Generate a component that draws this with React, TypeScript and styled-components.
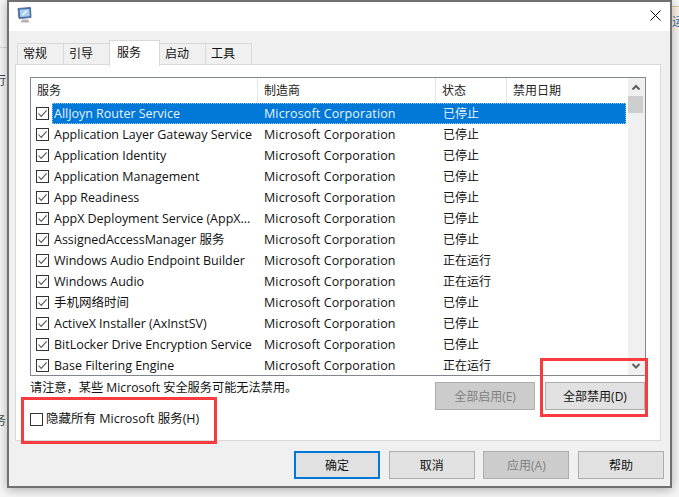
import styled, { createGlobalStyle } from "styled-components";

const FONT = `"Open Sans", "Noto Sans CJK SC", sans-serif`;

const services = [
  { name: "AllJoyn Router Service", status: "已停止" },
  { name: "Application Layer Gateway Service", status: "已停止" },
  { name: "Application Identity", status: "已停止" },
  { name: "Application Management", status: "已停止" },
  { name: "App Readiness", status: "已停止" },
  { name: "AppX Deployment Service (AppX...", status: "已停止" },
  { name: "AssignedAccessManager 服务", status: "已停止" },
  { name: "Windows Audio Endpoint Builder", status: "正在运行" },
  { name: "Windows Audio", status: "正在运行" },
  { name: "手机网络时间", status: "已停止" },
  { name: "ActiveX Installer (AxInstSV)", status: "已停止" },
  { name: "BitLocker Drive Encryption Service", status: "已停止" },
  { name: "Base Filtering Engine", status: "正在运行" },
];

const tabs = ["常规", "引导", "服务", "启动", "工具"];

const CheckMark = () => (
  <svg width="13" height="13" viewBox="0 0 13 13">
    <rect x="0.5" y="0.5" width="12" height="12" fill="#fff" stroke="#333" />
    <path d="M2.5 6.5 L5.2 9.4 L10.6 3.4" fill="none" stroke="#555" strokeWidth="1.1" />
  </svg>
);

const MonitorIcon = () => (
  <svg width="15" height="16" viewBox="0 0 15 16">
    <path d="M1 1.5 L13.5 0.5 L14 10.5 L2 11.5 Z" fill="#3f6fb5" stroke="#5b6f95" />
    <path d="M2.6 2.8 L12.3 2 L12.7 9.2 L3.2 10 Z" fill="#a9d0f0" />
    <path d="M5.5 8 L10 3.5" stroke="#f4f8fc" strokeWidth="1.4" />
    <path d="M5 12.5 H11 L12.5 15.5 H3.5 Z" fill="#b4b4b4" />
  </svg>
);

const App = () => {
  return (
    <>
      <GlobalStyle />
      <Desktop>
        <DesktopLine />
        <LeftText $top={71}>行</LeftText>
        <LeftText $top={411}>务</LeftText>
        <RightNote>运</RightNote>
      </Desktop>
      <Dialog>
        <TitleBar>
          <MonitorIcon />
          <CloseIcon width="11" height="11" viewBox="0 0 11 11">
            <path d="M0.5 0.5 L10.5 10.5 M10.5 0.5 L0.5 10.5" stroke="#111" strokeWidth="1" />
          </CloseIcon>
        </TitleBar>
        <Body>
          <TabRow>
            {tabs.map((tab) => (
              <Tab key={tab} $active={tab === "服务"}>
                {tab}
              </Tab>
            ))}
          </TabRow>
          <Panel>
            <ListBox>
              <ListMain>
                <HeaderRow>
                  <HeaderCell>服务</HeaderCell>
                  <HeaderCell>制造商</HeaderCell>
                  <HeaderCell>状态</HeaderCell>
                  <HeaderCell>禁用日期</HeaderCell>
                </HeaderRow>
                <Rows>
                  {services.map((service, index) => (
                    <Row key={service.name}>
                      <CheckCell>
                        <CheckMark />
                      </CheckCell>
                      <RowBody $selected={index === 0}>
                        <NameCell>{service.name}</NameCell>
                        <MakerCell>Microsoft Corporation</MakerCell>
                        <StatusCell>{service.status}</StatusCell>
                      </RowBody>
                    </Row>
                  ))}
                </Rows>
              </ListMain>
              <ScrollBar>
                <ScrollArrow width="17" height="18" viewBox="0 0 17 18">
                  <path d="M4.5 11.5 L8 8 L11.5 11.5" fill="none" stroke="#606060" strokeWidth="2" />
                </ScrollArrow>
                <Thumb />
                <ScrollSpacer />
                <ScrollArrow width="17" height="17" viewBox="0 0 17 17">
                  <path d="M4.5 6 L8 9.5 L11.5 6" fill="none" stroke="#606060" strokeWidth="2" />
                </ScrollArrow>
              </ScrollBar>
            </ListBox>
            <ActionArea>
              <NoteColumn>
                <Note>请注意，某些 Microsoft 安全服务可能无法禁用。</Note>
                <HideRow>
                  <EmptyBox />
                  隐藏所有 Microsoft 服务(H)
                </HideRow>
              </NoteColumn>
              <PanelButton $disabled>全部启用(E)</PanelButton>
              <PanelButton>全部禁用(D)</PanelButton>
            </ActionArea>
          </Panel>
          <Footer>
            <FooterButton $primary>确定</FooterButton>
            <FooterButton>取消</FooterButton>
            <FooterButton $disabled>应用(A)</FooterButton>
            <FooterButton>帮助</FooterButton>
          </Footer>
        </Body>
      </Dialog>
      <Callout $x={21} $y={397} $w={196} $h={47} />
      <Callout $x={540} $y={358} $w={108} $h={59} />
    </>
  );
};

export default App;

const GlobalStyle = createGlobalStyle`
  html, body {
    margin: 0;
    padding: 0;
    height: 497px;
    overflow: hidden;
    background: #f6f6f6;
    font-family: ${FONT};
    font-size: 12px;
    color: #111;
  }
`;

const Desktop = styled.div`
  position: absolute;
  inset: 0;
  overflow: hidden;
`;

const DesktopLine = styled.div`
  position: absolute;
  left: 0;
  top: 47px;
  width: 7px;
  height: 1px;
  background: #d8d8d8;
`;

const LeftText = styled.span<{ $top: number }>`
  position: absolute;
  left: -6px;
  top: ${(p) => p.$top}px;
  color: #444;
`;

const RightNote = styled.div`
  position: absolute;
  left: 672px;
  top: 6px;
  width: 12px;
  height: 25px;
  box-sizing: border-box;
  padding-top: 7px;
  background: #fbf3e4;
  border-top: 1px solid #d9c7a6;
  color: #3f6fb5;
  line-height: 16px;
`;

const Dialog = styled.div`
  position: absolute;
  left: 7px;
  top: 0;
  width: 665px;
  height: 488px;
  box-sizing: border-box;
  border: 2px solid #707070;
  background: #f0f0f0;
  box-shadow: 0 2px 10px rgba(0, 0, 0, 0.3);
  display: flex;
  flex-direction: column;
`;

const TitleBar = styled.div`
  box-sizing: border-box;
  height: 29px;
  flex: none;
  background: #fff;
  display: flex;
  align-items: center;
  justify-content: space-between;
  padding: 0 9px 3px 8px;
`;

const CloseIcon = styled.svg`
  display: block;
`;

const Body = styled.div`
  flex: 1;
  display: flex;
  flex-direction: column;
  padding: 10px 6px 8px 6px;
`;

const TabRow = styled.div`
  display: flex;
  align-items: flex-end;
  height: 24px;
  padding-left: 2px;
  margin-bottom: -1px;
  position: relative;
  z-index: 1;
`;

const Tab = styled.div<{ $active?: boolean }>`
  box-sizing: border-box;
  width: ${(p) => (p.$active ? 51 : 47)}px;
  height: ${(p) => (p.$active ? 26 : 22)}px;
  margin-right: -1px;
  margin-bottom: ${(p) => (p.$active ? -1 : 0)}px;
  padding-top: ${(p) => (p.$active ? 2 : 0)}px;
  padding-left: ${(p) => (p.$active ? 7 : 5)}px;
  background: ${(p) => (p.$active ? "#fff" : "#f0f0f0")};
  border: 1px solid #d9d9d9;
  border-bottom: ${(p) => (p.$active ? "none" : "1px solid #d9d9d9")};
  position: relative;
  z-index: ${(p) => (p.$active ? 2 : 1)};
`;

const Panel = styled.div`
  box-sizing: border-box;
  width: 646px;
  height: 377px;
  margin-right: 3px;
  background: #fff;
  border: 1px solid #d9d9d9;
  padding: 12px 14px 0 14px;
  display: flex;
  flex-direction: column;
`;

const ListBox = styled.div`
  box-sizing: border-box;
  width: 616px;
  height: 299px;
  border: 1px solid #828790;
  display: flex;
  justify-content: space-between;
  flex: none;
  overflow: hidden;
`;

const ListMain = styled.div`
  width: 595px;
  display: flex;
  flex-direction: column;
`;

const HeaderRow = styled.div`
  display: grid;
  grid-template-columns: 227px 178px 71px 1fr;
  height: 25px;
  flex: none;
`;

const HeaderCell = styled.div`
  border-right: 1px solid #e5e5e5;
  padding-left: 6px;
  line-height: 25px;
  color: #222;
  &:last-child {
    border-right: none;
  }
`;

const Rows = styled.div`
  display: flex;
  flex-direction: column;
`;

const Row = styled.div`
  height: 21px;
  flex: none;
  display: flex;
`;

const CheckCell = styled.div`
  width: 21px;
  flex: none;
  display: flex;
  align-items: center;
  padding-left: 5px;
  box-sizing: border-box;
  svg {
    display: block;
  }
`;

const RowBody = styled.div<{ $selected?: boolean }>`
  flex: 1;
  box-sizing: border-box;
  display: grid;
  grid-template-columns: 206px 178px 1fr;
  align-items: center;
  line-height: 19px;
  border: 1px dotted ${(p) => (p.$selected ? "#9ac7ee" : "transparent")};
  background: ${(p) => (p.$selected ? "#0078d7" : "transparent")};
  color: ${(p) => (p.$selected ? "#e8f3fc" : "#111")};
`;

const NameCell = styled.div`
  padding-left: 1px;
  white-space: nowrap;
  font-size: 12.5px;
  letter-spacing: -0.02px;
`;

const MakerCell = styled.div`
  padding-left: 5px;
  white-space: nowrap;
  font-size: 12.5px;
  letter-spacing: 0.13px;
`;

const StatusCell = styled.div`
  padding-left: 6px;
`;

const ScrollBar = styled.div`
  width: 17px;
  flex: none;
  background: #f0f0f0;
  display: flex;
  flex-direction: column;
`;

const ScrollArrow = styled.svg`
  display: block;
  flex: none;
`;

const Thumb = styled.div`
  width: 15px;
  height: 17px;
  background: #cdcdcd;
  flex: none;
`;

const ScrollSpacer = styled.div`
  flex: 1;
`;

const ActionArea = styled.div`
  display: flex;
  align-items: flex-start;
  padding-top: 6px;
`;

const NoteColumn = styled.div`
  width: 405px;
  flex: none;
  display: flex;
  flex-direction: column;
`;

const Note = styled.div`
  line-height: 18px;
  margin-top: -3px;
  white-space: nowrap;
  font-size: 12.2px;
`;

const HideRow = styled.div`
  display: flex;
  align-items: center;
  gap: 3px;
  margin-top: 13px;
  line-height: 18px;
  white-space: nowrap;
  font-size: 12.5px;
`;

const EmptyBox = styled.span`
  width: 13px;
  height: 13px;
  box-sizing: border-box;
  border: 1px solid #333;
  background: #fff;
  flex: none;
`;

const PanelButton = styled.div<{ $disabled?: boolean }>`
  box-sizing: border-box;
  width: 100px;
  height: 28px;
  margin-right: 10px;
  display: flex;
  align-items: center;
  justify-content: center;
  border: 1px solid #adadad;
  background: ${(p) => (p.$disabled ? "#cccccc" : "#e1e1e1")};
  color: ${(p) => (p.$disabled ? "#808080" : "#111")};
  &:last-child {
    margin-right: 0;
  }
`;

const Footer = styled.div`
  display: flex;
  justify-content: flex-end;
  gap: 8.67px;
  margin-top: 10px;
`;

const FooterButton = styled.div<{ $primary?: boolean; $disabled?: boolean }>`
  box-sizing: border-box;
  width: 86px;
  height: 28px;
  display: flex;
  align-items: center;
  justify-content: center;
  border: ${(p) => (p.$primary ? "2px solid #0078d7" : "1px solid #adadad")};
  background: ${(p) => (p.$disabled ? "#cccccc" : "#e1e1e1")};
  color: ${(p) => (p.$disabled ? "#808080" : "#111")};
`;

const Callout = styled.div<{ $x: number; $y: number; $w: number; $h: number }>`
  position: absolute;
  left: ${(p) => p.$x}px;
  top: ${(p) => p.$y}px;
  width: ${(p) => p.$w}px;
  height: ${(p) => p.$h}px;
  box-sizing: border-box;
  border: 3px solid #f73b3f;
  pointer-events: none;
`;
